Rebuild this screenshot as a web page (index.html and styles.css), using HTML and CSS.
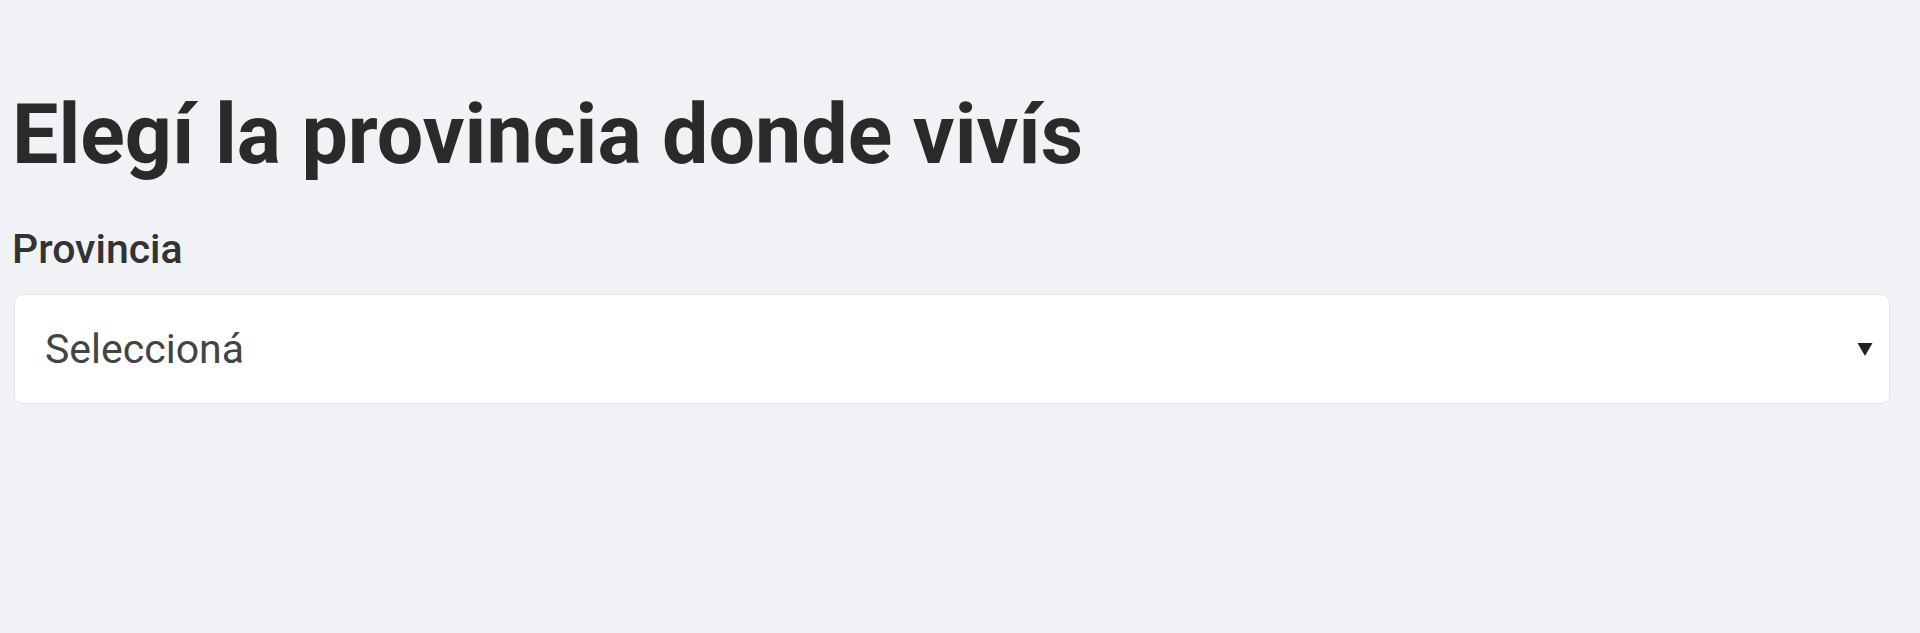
FILE: index.html
```html
<!DOCTYPE html>
<html lang="es">
<head>
<meta charset="utf-8">
<title>Elegí la provincia donde vivís</title>
<link rel="stylesheet" href="styles.css">
</head>
<body>
<main class="page">
  <h1 class="title">Elegí la provincia donde vivís</h1>
  <form class="form">
    <label class="label" for="provincia">Provincia</label>
    <div class="select">
      <span class="select-value">Seleccioná</span>
      <svg class="select-arrow" width="16" height="15" viewBox="0 0 16 15" aria-hidden="true"><path d="M0.5 1 L15.5 1 L8 14 Z" fill="#222"/></svg>
    </div>
  </form>
</main>
</body>
</html>
```
FILE: styles.css
```css
html, body {
  margin: 0;
  padding: 0;
  background: #f0f2f5;
}
body {
  font-family: Roboto, "Liberation Sans", Arial, sans-serif;
  color: #333;
}
.page {
  padding: 87px 30px 0 12px;
}
.title {
  margin: 0;
  font-size: 82.5px;
  line-height: 96px;
  font-weight: 700;
  color: #2a2a2a;
}
.form {
  display: flex;
  flex-direction: column;
  margin-top: 36px;
}
.label {
  font-size: 41px;
  line-height: 60px;
  font-weight: 500;
  color: #333;
}
.select {
  margin-top: 15px;
  margin-left: 2px;
  height: 110px;
  box-sizing: border-box;
  background: #fff;
  border: 1px solid #e2e4e8;
  border-radius: 8px;
  display: flex;
  align-items: center;
  justify-content: space-between;
  padding: 0 16px 0 30px;
}
.select-value {
  font-size: 41px;
  line-height: 60px;
  color: #444;
}
.select-arrow {
  display: block;
}
```
